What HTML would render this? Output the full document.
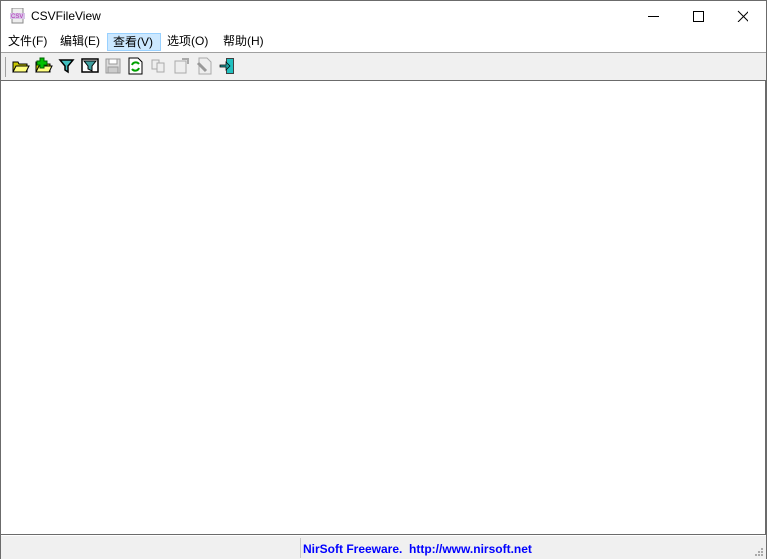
<!DOCTYPE html>
<html><head><meta charset="utf-8"><style>
*{margin:0;padding:0;box-sizing:border-box}
body{width:767px;height:559px;overflow:hidden;background:#fff;font-family:"Liberation Sans","Noto Sans CJK SC",sans-serif;position:relative}
.win{position:absolute;left:0;top:0;width:767px;height:559px;border:1px solid #6b6b6b;}
.title{position:absolute;left:0;top:0;width:765px;height:31px;background:#fff}
.title .t{position:absolute;left:30px;top:8px;font-size:12px;color:#000}
.menu{position:absolute;left:0;top:31px;width:765px;height:19px;background:#fff;font-size:12px}
.menu span{position:absolute;top:0px;height:18px;line-height:18px;padding:0 3px}
.tb{position:absolute;left:0;top:51px;width:765px;height:28px;background:#f0f0f0;border-top:1px solid #a0a0a0}
.content{position:absolute;left:0;top:79px;width:765px;height:455px;background:#fff;border-top:1px solid #6b6b6b;border-bottom:1px solid #6b6b6b;border-right:1px solid #6b6b6b}
.status{position:absolute;left:0;top:535px;width:765px;height:23px;background:#f0f0f0}
.status .s{position:absolute;left:302px;top:6px;font-size:12px;font-weight:bold;color:#0000ff;font-family:"Liberation Sans",sans-serif}
.status .d{position:absolute;left:299px;top:2px;width:1px;height:20px;background:#c8c8c8}
.ic{position:absolute;top:4px}
</style></head><body><div class="win">
<div class="title">
<svg style="position:absolute;left:9px;top:7px" width="16" height="16"><rect x="2" y="0" width="11" height="15" fill="#eee" stroke="#888"/><rect x="0" y="5" width="15" height="6" fill="#d8c4e8"/><text x="1" y="10" font-size="6" fill="#b030b0" font-family="Liberation Sans">CSV</text></svg>
<div class="t">CSVFileView</div>
<svg style="position:absolute;left:647px;top:9px" width="100" height="12"><line x1="0" y1="6.5" x2="11" y2="6.5" stroke="#000"/><rect x="45.5" y="1.5" width="10" height="10" fill="none" stroke="#000"/><path d="M90 1L101 12M101 1L90 12" stroke="#000"/></svg>
</div>
<div class="menu">
<span style="left:4px">文件(F)</span>
<span style="left:56px">编辑(E)</span>
<span style="left:106px;background:#cce8ff;border:1px solid #99d1ff;line-height:16px;top:1px;width:54px;padding:0 0 0 5px">查看(V)</span>
<span style="left:163px">选项(O)</span>
<span style="left:219px">帮助(H)</span>
</div>
<div class="tb">
<div style="position:absolute;left:4px;top:4px;width:1px;height:20px;background:#a0a0a0"></div>
<svg class="ic" style="left:11px" width="18" height="18"><path d="M1 5h5l1 2h8v8H1z" fill="#c8c800" stroke="#000"/><path d="M1 15l3-6h13l-3 6z" fill="#ffff80" stroke="#000"/></svg>
<svg class="ic" style="left:34px" width="18" height="18"><path d="M1 5h5l1 2h8v8H1z" fill="#c8c800" stroke="#000"/><path d="M1 15l3-6h13l-3 6z" fill="#ffff80" stroke="#000"/><path d="M5 1h4v3h3v4H9v3H5V8H2V4h3z" fill="#00c000" stroke="#006000"/></svg>
<svg class="ic" style="left:57px" width="18" height="18"><path d="M2 3h13l-5 6v6l-3-2V9z" fill="#40c0c0" stroke="#000" stroke-width="1.5"/></svg>
<svg class="ic" style="left:80px" width="18" height="18"><rect x="1" y="2" width="16" height="13" fill="#fff" stroke="#000" stroke-width="1.5"/><path d="M3 4h12l-4 5v5l-4-2V9z" fill="#40a0a0" stroke="#000"/></svg>
<svg class="ic" style="left:103px" width="18" height="18"><rect x="2" y="2" width="14" height="14" fill="#ddd" stroke="#999"/><rect x="5" y="2" width="8" height="5" fill="#fff" stroke="#999"/><rect x="4" y="10" width="10" height="6" fill="#ccc" stroke="#999"/></svg>
<svg class="ic" style="left:126px" width="18" height="18"><path d="M2 1h9l4 4v12H2z" fill="#fff" stroke="#000"/><path d="M5 8a4 4 0 0 1 7-1M12 11a4 4 0 0 1-7 1" fill="none" stroke="#00a000" stroke-width="2"/></svg>
<svg class="ic" style="left:149px" width="18" height="18"><rect x="2" y="3" width="7" height="9" fill="#eee" stroke="#aaa"/><rect x="7" y="6" width="7" height="9" fill="#eee" stroke="#aaa"/></svg>
<svg class="ic" style="left:172px" width="18" height="18"><rect x="2" y="4" width="11" height="12" fill="#eee" stroke="#aaa"/><path d="M9 2h6v5" fill="none" stroke="#aaa" stroke-width="2"/></svg>
<svg class="ic" style="left:195px" width="18" height="18"><path d="M3 1h8l4 4v12H3z" fill="#eee" stroke="#aaa"/><path d="M2 6l8 8" stroke="#999" stroke-width="3"/></svg>
<svg class="ic" style="left:218px" width="18" height="18"><rect x="7" y="1" width="8" height="16" fill="#404040"/><rect x="8" y="2" width="6" height="14" fill="#20c0c0"/><path d="M1 8h6V5l4 4-4 4v-3H1z" fill="#20a0a0" stroke="#000" stroke-width=".7"/></svg>
</div>
<div class="content"></div>
<div class="status"><div class="d"></div><div class="s">NirSoft Freeware.&nbsp; http://www.nirsoft.net</div>
<svg style="position:absolute;right:2px;bottom:2px" width="10" height="10" fill="#aaa"><rect x="7" y="1" width="2" height="2"/><rect x="4" y="4" width="2" height="2"/><rect x="7" y="4" width="2" height="2"/><rect x="1" y="7" width="2" height="2"/><rect x="4" y="7" width="2" height="2"/><rect x="7" y="7" width="2" height="2"/></svg>
</div>
</div></body></html>
